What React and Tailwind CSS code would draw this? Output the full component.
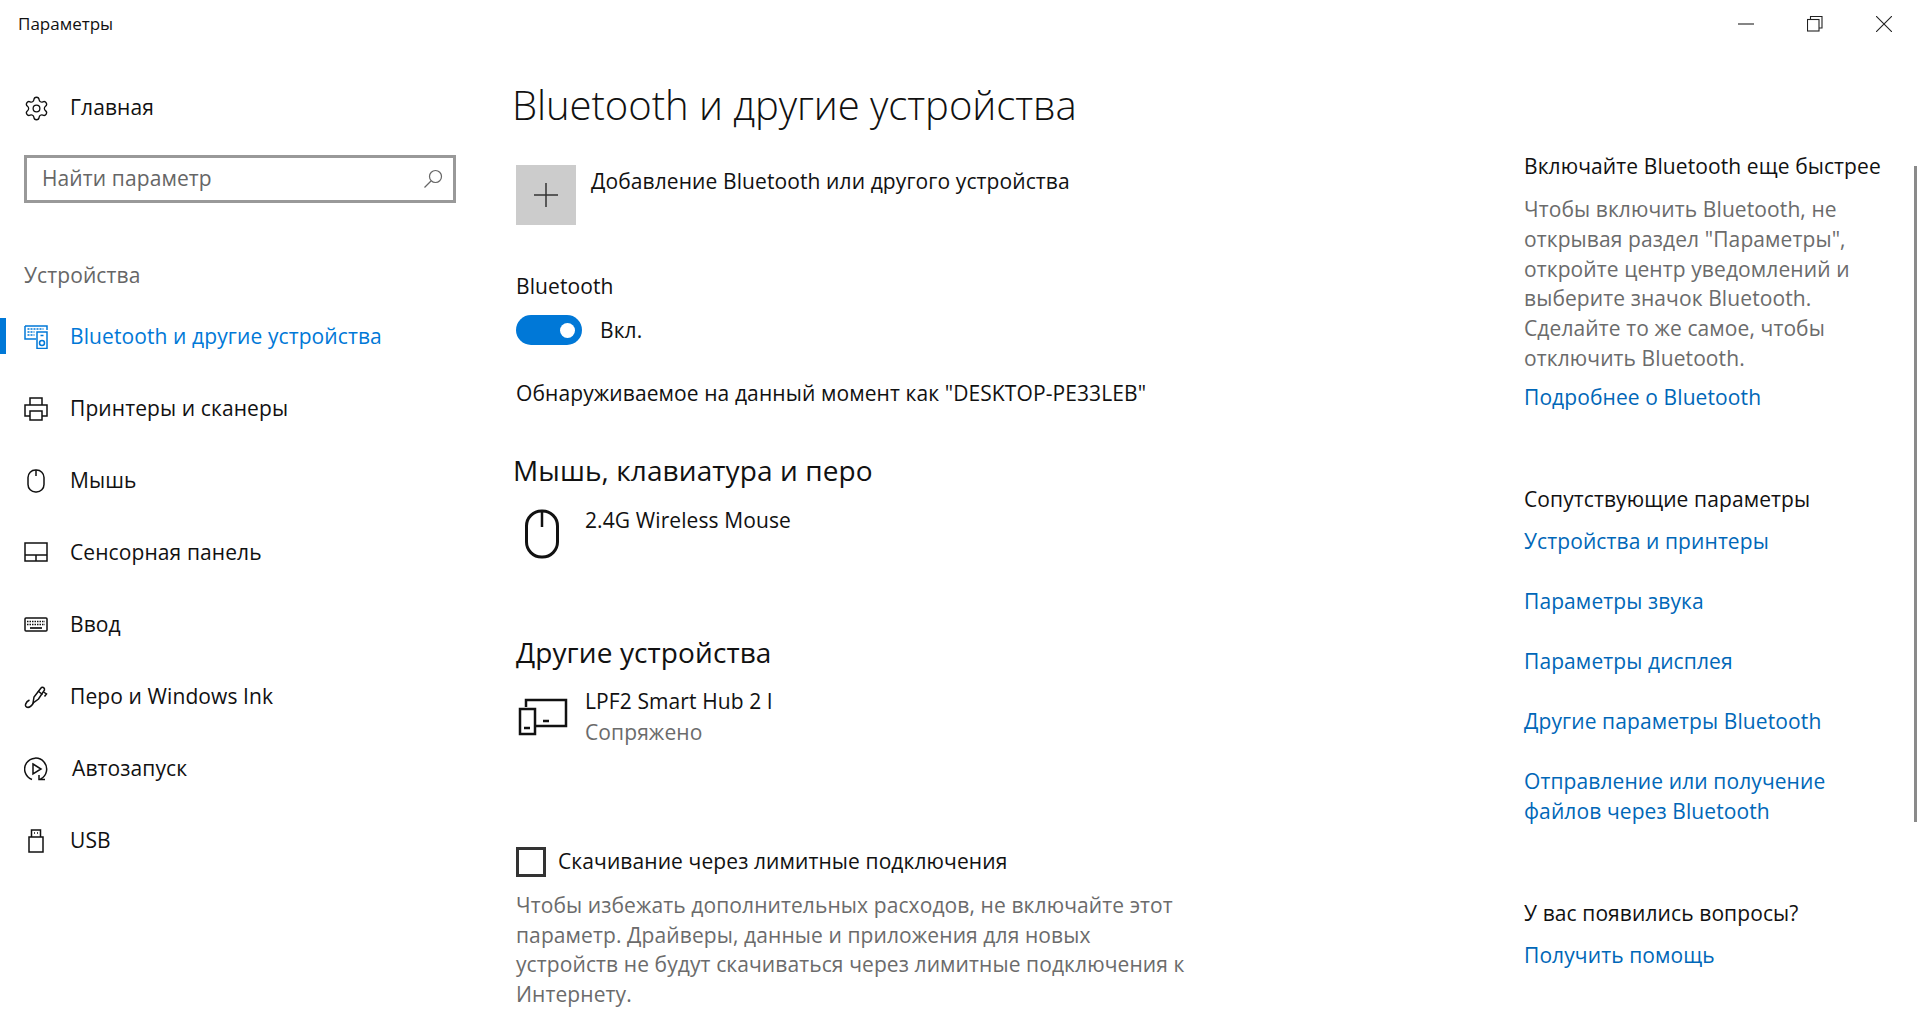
import { Settings } from 'lucide-react';

const FONT = "font-['Open_Sans',sans-serif]";

const ico = {
  fill: 'none',
  stroke: 'currentColor',
  strokeWidth: 1.5,
};

function KeyboardSpeakerIcon() {
  return (
    <svg width="24" height="24" viewBox="0 0 24 24" {...ico}>
      <path d="M1 1h22v4M1 1v13h11" />
      <path d="M3.500 4h16M3.500 7h7M3.500 10h7" strokeWidth="1.6" strokeDasharray="2 1" />
      <rect x="13" y="7" width="10" height="16.500" />
      <circle cx="18" cy="18" r="2.500" />
      <path d="M16.500 10.500h3" />
    </svg>
  );
}

function PrinterIcon() {
  return (
    <svg width="24" height="24" viewBox="0 0 24 24" {...ico}>
      <path d="M6 8V1h12v7M6 19H1V8h22v11h-5" />
      <path d="M6 14h12v9H6z" />
    </svg>
  );
}

function MouseIcon() {
  return (
    <svg width="24" height="24" viewBox="0 0 24 24" {...ico}>
      <rect x="4" y="1" width="16" height="22" rx="7.500" />
      <path d="M12 1v6" />
    </svg>
  );
}

function TouchpadIcon() {
  return (
    <svg width="24" height="24" viewBox="0 0 24 24" {...ico}>
      <rect x="1" y="2" width="22" height="18" />
      <path d="M1 14h22M12 14v6" />
    </svg>
  );
}

function KeyboardIcon() {
  return (
    <svg width="24" height="24" viewBox="0 0 24 24" {...ico}>
      <rect x="1" y="5" width="22" height="13" rx="1" />
      <path d="M3 8.500h18M3 11.500h18" strokeDasharray="1.500 1" strokeWidth="1.700" />
      <path d="M6 15h12" strokeWidth="1.700" />
    </svg>
  );
}

function PenIcon() {
  return (
    <svg width="24" height="24" viewBox="0 0 24 24" {...ico}>
      <path d="M9 18l1-6 7-9c1-1.500 4-.5 3.500 2l-6 9z" />
      <path d="M14 6l4.500 3.500M19.500 7l3 2-2 2.500" />
      <path d="M9.500 18c-2 3-5 5-7 4s-1-5 3-7" />
    </svg>
  );
}

function AutoplayIcon() {
  return (
    <svg width="24" height="24" viewBox="0 0 24 24" {...ico}>
      <path d="M8 22.500A11 11 0 1 1 16.500 22" />
      <path d="M9 7l8 5-8 5z" />
      <path d="M15 18v4.500h6" />
    </svg>
  );
}

function UsbIcon() {
  return (
    <svg width="24" height="24" viewBox="0 0 24 24" {...ico}>
      <path d="M7.500 8V1h9v7" />
      <rect x="5" y="8" width="14" height="15" />
      <path d="M10 4h1M13 4h1" />
    </svg>
  );
}

function NavRow({ icon, label, active, textClass = 'ml-[22px]' }) {
  return (
    <div className={`relative flex h-[72px] items-center pl-6 ${active ? 'text-[#0078d7]' : 'text-[#111]'}`}>
      {active && <div className="absolute left-0 top-[17px] h-9 w-1.5 bg-[#0078d7]" />}
      <span className="flex w-6 justify-center">{icon}</span>
      <span className={textClass}>{label}</span>
    </div>
  );
}

function Sidebar() {
  return (
    <aside className="w-[516px] shrink-0">
      <div className="mt-9 flex h-12 items-center pl-6 text-[#111]">
        <Settings size={27} strokeWidth={1.150} className="-ml-px" />
        <span className="ml-[20px]">Главная</span>
      </div>
      <div className="ml-6 mt-[23px] flex h-12 w-[432px] items-center justify-between border-[3px] border-[#999] pl-[15px] pr-[10px] text-[#666]">
        <span>Найти параметр</span>
        <svg width="20" height="20" viewBox="0 0 20 20" fill="none" stroke="#666" strokeWidth="1.200">
          <circle cx="12.500" cy="7.500" r="6" />
          <path d="M8 12L1.500 18.500" />
        </svg>
      </div>
      <div className="ml-6 mt-[57px] h-[30px] leading-[30px] text-[#666]">Устройства</div>
      <div className="mt-[11px]">
        <NavRow active icon={<KeyboardSpeakerIcon />} label="Bluetooth и другие устройства" />
        <NavRow icon={<PrinterIcon />} label="Принтеры и сканеры" />
        <NavRow icon={<MouseIcon />} label="Мышь" />
        <NavRow icon={<TouchpadIcon />} label="Сенсорная панель" />
        <NavRow icon={<KeyboardIcon />} label="Ввод" />
        <NavRow icon={<PenIcon />} label="Перо и Windows Ink" />
        <NavRow icon={<AutoplayIcon />} label="Автозапуск" textClass="ml-[24px]" />
        <NavRow icon={<UsbIcon />} label="USB" />
      </div>
    </aside>
  );
}

function Main() {
  return (
    <main className="w-[1008px] shrink-0 text-[#111]">
      <h1 className="-ml-1 mt-[29px] h-14 text-[40px] font-light leading-[56px] tracking-[-0.05px]">Bluetooth и другие устройства</h1>
      <div className="mt-[32px] flex">
        <div className="flex h-[60px] w-[60px] items-center justify-center bg-[#ccc]">
          <svg width="26" height="26" viewBox="0 0 26 26" stroke="#333" strokeWidth="1.500">
            <path d="M13 1v24M1 13h24" />
          </svg>
        </div>
        <span className="ml-[15px] mt-px h-[30px] leading-[30px]">Добавление Bluetooth или другого устройства</span>
      </div>
      <div className="mt-[46px] h-[30px] leading-[30px]">Bluetooth</div>
      <div className="mt-[14px] flex h-[30px] items-center">
        <div className="flex h-[30px] w-[66px] items-center justify-end rounded-full bg-[#0078d7] pr-[7px]">
          <div className="h-[15px] w-[15px] rounded-full bg-white" />
        </div>
        <span className="ml-[18px] mt-[2px]">Вкл.</span>
      </div>
      <div className="mt-[33px] h-[30px] leading-[30px]">Обнаруживаемое на данный момент как "DESKTOP-PE33LEB"</div>
      <h2 className="-ml-[3px] mt-[42px] h-10 text-[28px] font-normal leading-10">Мышь, клавиатура и перо</h2>
      <div className="mt-[15px] flex h-[60px]">
        <svg className="ml-[8px] mt-[4px]" width="36" height="50" viewBox="0 0 36 50" fill="none" stroke="#111" strokeWidth="3">
          <rect x="2.500" y="2" width="31" height="46" rx="15" />
          <path d="M18 2v16" strokeWidth="2.500" />
        </svg>
        <span className="ml-[25px] h-[30px] leading-[30px]">2.4G Wireless Mouse</span>
      </div>
      <h2 className="mt-[67px] h-10 text-[28px] font-normal leading-10">Другие устройства</h2>
      <div className="mt-[14px] flex">
        <svg className="ml-[2px] mt-[12px]" width="50" height="38" viewBox="0 0 50 38" fill="none" stroke="#111" strokeWidth="2.500">
          <path d="M8 9V2h40v26H17" />
          <rect x="2" y="11" width="15" height="25" />
          <path d="M6 30h6M25 23h6" />
        </svg>
        <div className="ml-[17px]">
          <div className="h-[30px] leading-[30px]">LPF2 Smart Hub 2 I</div>
          <div className="h-[31px] leading-[32px] text-[#6b6b6b]">Сопряжено</div>
        </div>
      </div>
      <div className="mt-[100px] flex h-[30px] items-center">
        <div className="h-[30px] w-[30px] border-[3px] border-[#333]" />
        <span className="ml-3">Скачивание через лимитные подключения</span>
      </div>
      <p className="mt-[14px] leading-[29.6px] text-[#6b6b6b]">
        Чтобы избежать дополнительных расходов, не включайте этот<br />
        параметр. Драйверы, данные и приложения для новых<br />
        устройств не будут скачиваться через лимитные подключения к<br />
        Интернету.
      </p>
    </main>
  );
}

function RightPanel() {
  const link = 'block h-[30px] leading-[30px] text-[#0067b8]';
  return (
    <section className="min-w-0 flex-1 whitespace-nowrap">
      <div className="mt-[103px] h-[30px] leading-[30px] text-[#111]">Включайте Bluetooth еще быстрее</div>
      <p className="mt-[14px] leading-[29.8px] text-[#6b6b6b]">
        Чтобы включить Bluetooth, не<br />
        открывая раздел "Параметры",<br />
        откройте центр уведомлений и<br />
        выберите значок Bluetooth.<br />
        Сделайте то же самое, чтобы<br />
        отключить Bluetooth.
      </p>
      <a className={`${link} mt-[8px]`}>Подробнее о Bluetooth</a>
      <div className="mt-[72px] h-[30px] leading-[30px] text-[#111]">Сопутствующие параметры</div>
      <a className={`${link} mt-3`}>Устройства и принтеры</a>
      <a className={`${link} mt-[30px]`}>Параметры звука</a>
      <a className={`${link} mt-[30px]`}>Параметры дисплея</a>
      <a className={`${link} mt-[30px]`}>Другие параметры Bluetooth</a>
      <a className={`${link} mt-[30px]`}>Отправление или получение</a>
      <a className={link}>файлов через Bluetooth</a>
      <div className="mt-[72px] h-[30px] leading-[30px] text-[#111]">У вас появились вопросы?</div>
      <a className={`${link} mt-3`}>Получить помощь</a>
    </section>
  );
}

export default function App() {
  return (
    <div className={`relative h-[1010px] w-[1919px] overflow-hidden bg-white text-[21px] tracking-[0.1px] ${FONT}`}>
      <header className="flex h-12 items-center justify-between pl-[18px] text-[#111]">
        <span className="text-[17px] tracking-normal">Параметры</span>
        <div className="flex items-center pr-[27px]">
          <svg width="16" height="16" viewBox="0 0 16 16" stroke="#222" strokeWidth="1.100" fill="none">
            <path d="M0 8h16" />
          </svg>
          <svg className="ml-[53px]" width="16" height="16" viewBox="0 0 16 16" stroke="#222" strokeWidth="1.100" fill="none">
            <rect x=".5" y="3.500" width="11.500" height="11.500" />
            <path d="M3.500 3.500V.5H15V12h-3" />
          </svg>
          <svg className="ml-[53px]" width="16" height="16" viewBox="0 0 16 16" stroke="#222" strokeWidth="1.100" fill="none">
            <path d="M0 0l16 16M16 0L0 16" />
          </svg>
        </div>
      </header>
      <div className="flex">
        <Sidebar />
        <Main />
        <RightPanel />
      </div>
      <div className="absolute left-[1914px] top-[166px] h-[656px] w-[3px] bg-[#8a8a8a]" />
    </div>
  );
}
